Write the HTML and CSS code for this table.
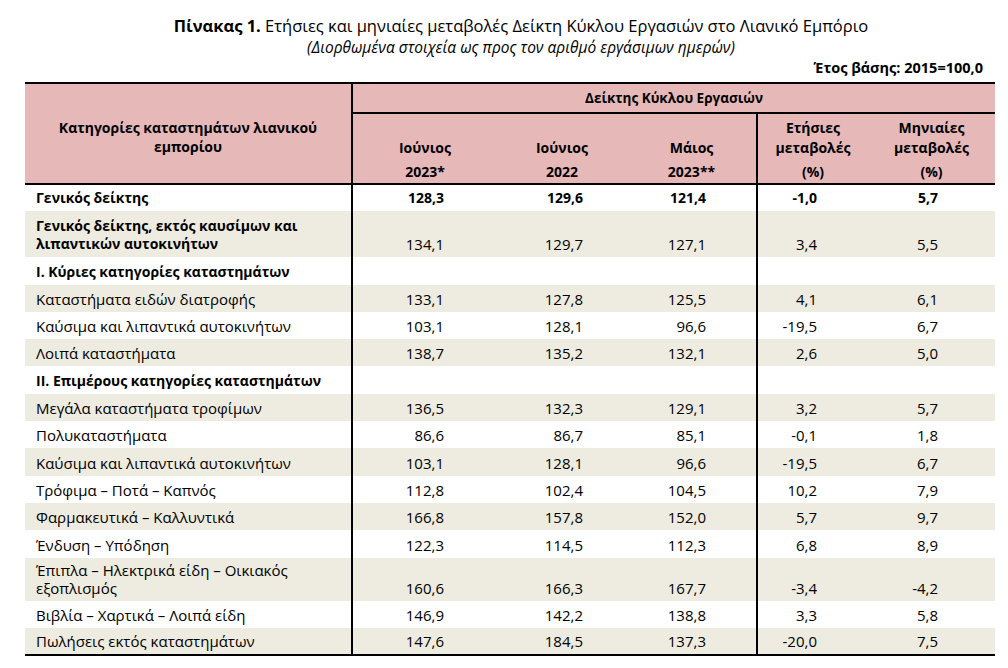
FILE: index.html
```html
<!DOCTYPE html>
<html lang="el">
<head>
<meta charset="utf-8">
<title>Πίνακας 1</title>
<link rel="stylesheet" href="styles.css">
</head>
<body>
<div class="page">
  <div class="title"><b>Πίνακας 1.</b> Ετήσιες και μηνιαίες μεταβολές Δείκτη Κύκλου Εργασιών στο Λιανικό Εμπόριο</div>
  <div class="subtitle">(Διορθωμένα στοιχεία ως προς τον αριθμό εργάσιμων ημερών)</div>
  <div class="base">Έτος βάσης: 2015=100,0</div>
  <table class="data">
    <colgroup>
      <col class="c-label">
      <col class="c-a">
      <col class="c-b">
      <col class="c-c">
      <col class="c-d">
      <col class="c-e">
    </colgroup>
    <thead>
      <tr class="h-top">
        <th rowspan="2" class="h-label sep">Κατηγορίες καταστημάτων λιανικού<br>εμπορίου</th>
        <th colspan="5" class="h-group">Δείκτης Κύκλου Εργασιών</th>
      </tr>
      <tr class="h-sub">
        <th><div class="hl">Ιούνιος</div><div class="hy">2023*</div></th>
        <th><div class="hl">Ιούνιος</div><div class="hy">2022</div></th>
        <th class="sep"><div class="hl">Μάιος</div><div class="hy">2023**</div></th>
        <th><div class="hl">Ετήσιες<br>μεταβολές</div><div class="hy">(%)</div></th>
        <th><div class="hl">Μηνιαίες<br>μεταβολές</div><div class="hy">(%)</div></th>
      </tr>
    </thead>
    <tbody>
      <tr class="bold">
        <td class="lbl sep">Γενικός δείκτης</td>
        <td class="va">128,3</td><td class="vb">129,6</td><td class="vc sep">121,4</td><td class="vd">-1,0</td><td class="ve">5,7</td>
      </tr>
      <tr class="alt dbl">
        <td class="lbl sep b">Γενικός δείκτης, εκτός καυσίμων και<br>λιπαντικών αυτοκινήτων</td>
        <td class="va">134,1</td><td class="vb">129,7</td><td class="vc sep">127,1</td><td class="vd">3,4</td><td class="ve">5,5</td>
      </tr>
      <tr>
        <td class="lbl sep b">Ι. Κύριες κατηγορίες καταστημάτων</td>
        <td class="va"></td><td class="vb"></td><td class="vc sep"></td><td class="vd"></td><td class="ve"></td>
      </tr>
      <tr class="alt">
        <td class="lbl sep">Καταστήματα ειδών διατροφής</td>
        <td class="va">133,1</td><td class="vb">127,8</td><td class="vc sep">125,5</td><td class="vd">4,1</td><td class="ve">6,1</td>
      </tr>
      <tr>
        <td class="lbl sep">Καύσιμα και λιπαντικά αυτοκινήτων</td>
        <td class="va">103,1</td><td class="vb">128,1</td><td class="vc sep">96,6</td><td class="vd">-19,5</td><td class="ve">6,7</td>
      </tr>
      <tr class="alt">
        <td class="lbl sep">Λοιπά καταστήματα</td>
        <td class="va">138,7</td><td class="vb">135,2</td><td class="vc sep">132,1</td><td class="vd">2,6</td><td class="ve">5,0</td>
      </tr>
      <tr>
        <td class="lbl sep b">ΙΙ. Επιμέρους κατηγορίες καταστημάτων</td>
        <td class="va"></td><td class="vb"></td><td class="vc sep"></td><td class="vd"></td><td class="ve"></td>
      </tr>
      <tr class="alt">
        <td class="lbl sep">Μεγάλα καταστήματα τροφίμων</td>
        <td class="va">136,5</td><td class="vb">132,3</td><td class="vc sep">129,1</td><td class="vd">3,2</td><td class="ve">5,7</td>
      </tr>
      <tr>
        <td class="lbl sep">Πολυκαταστήματα</td>
        <td class="va">86,6</td><td class="vb">86,7</td><td class="vc sep">85,1</td><td class="vd">-0,1</td><td class="ve">1,8</td>
      </tr>
      <tr class="alt">
        <td class="lbl sep">Καύσιμα και λιπαντικά αυτοκινήτων</td>
        <td class="va">103,1</td><td class="vb">128,1</td><td class="vc sep">96,6</td><td class="vd">-19,5</td><td class="ve">6,7</td>
      </tr>
      <tr>
        <td class="lbl sep">Τρόφιμα – Ποτά – Καπνός</td>
        <td class="va">112,8</td><td class="vb">102,4</td><td class="vc sep">104,5</td><td class="vd">10,2</td><td class="ve">7,9</td>
      </tr>
      <tr class="alt">
        <td class="lbl sep">Φαρμακευτικά – Καλλυντικά</td>
        <td class="va">166,8</td><td class="vb">157,8</td><td class="vc sep">152,0</td><td class="vd">5,7</td><td class="ve">9,7</td>
      </tr>
      <tr>
        <td class="lbl sep">Ένδυση – Υπόδηση</td>
        <td class="va">122,3</td><td class="vb">114,5</td><td class="vc sep">112,3</td><td class="vd">6,8</td><td class="ve">8,9</td>
      </tr>
      <tr class="alt dbl2">
        <td class="lbl sep">Έπιπλα – Ηλεκτρικά είδη – Οικιακός<br>εξοπλισμός</td>
        <td class="va">160,6</td><td class="vb">166,3</td><td class="vc sep">167,7</td><td class="vd">-3,4</td><td class="ve">-4,2</td>
      </tr>
      <tr>
        <td class="lbl sep">Βιβλία – Χαρτικά – Λοιπά είδη</td>
        <td class="va">146,9</td><td class="vb">142,2</td><td class="vc sep">138,8</td><td class="vd">3,3</td><td class="ve">5,8</td>
      </tr>
      <tr class="alt last">
        <td class="lbl sep">Πωλήσεις εκτός καταστημάτων</td>
        <td class="va">147,6</td><td class="vb">184,5</td><td class="vc sep">137,3</td><td class="vd">-20,0</td><td class="ve">7,5</td>
      </tr>
    </tbody>
  </table>
</div>
</body>
</html>
```

FILE: styles.css
```css
html, body {
  margin: 0;
  padding: 0;
  background: #ffffff;
}

body {
  font-family: "Open Sans", "Noto Sans", "DejaVu Sans", sans-serif;
  color: #000000;
}

.page {
  width: 970px;
  padding: 16px 0 0 25px;
}

.title {
  text-align: center;
  padding-left: 22px;
  font-size: 16.5px;
  line-height: 20px;
  height: 20px;
  white-space: nowrap;
}

.subtitle {
  text-align: center;
  padding-left: 22px;
  font-size: 15.5px;
  font-style: italic;
  line-height: 18px;
  height: 20px;
  margin-top: 2px;
  white-space: nowrap;
}

.base {
  text-align: right;
  padding-right: 12px;
  font-size: 14.5px;
  font-weight: 700;
  line-height: 18px;
  height: 23px;
  margin-top: 1px;
}

.data {
  width: 970px;
  table-layout: fixed;
  border-collapse: collapse;
  font-size: 15px;
}

.c-label { width: 327px; }
.c-a { width: 145px; }
.c-b { width: 130px; }
.c-c { width: 130px; }
.c-d { width: 111px; }
.c-e { width: 127px; }

.data th,
.data td {
  padding: 0;
}

.data thead th {
  background: #e6b9b8;
  font-weight: 700;
  font-size: 14px;
  text-align: center;
}

.h-top th {
  border-top: 2px solid #000;
}

.h-top {
  height: 30px;
}

.data thead th.h-group {
  border-bottom: 2px solid #000;
  vertical-align: middle;
  font-size: 13.5px;
}

.h-label {
  vertical-align: middle;
  line-height: 19px;
  padding-top: 6px !important;
  border-bottom: 2px solid #000;
}

.h-sub {
  height: 71px;
}

.h-sub th {
  vertical-align: bottom;
  border-bottom: 2px solid #000;
}

.hl {
  line-height: 20px;
}

.hy {
  line-height: 20px;
  margin-top: 4px;
  padding-bottom: 1px;
}

.sep {
  border-right: 2px solid #000;
}

.data tbody tr {
  height: 27.3px;
}

.data tbody tr.dbl {
  height: 46px;
}

.data tbody tr.dbl2 {
  height: 43px;
}

.data tbody td {
  vertical-align: bottom;
  line-height: 18px;
  padding-bottom: 4px;
  white-space: nowrap;
}

.data tbody tr.alt td {
  background: #eeece1;
}

.data tbody tr.last td {
  border-bottom: 2px solid #000;
}

.lbl {
  text-align: left;
  padding-left: 11px !important;
}

.b,
.bold td {
  font-weight: 700;
  font-size: 14px;
}

.va { text-align: right; padding-right: 53px !important; }
.vb { text-align: right; padding-right: 44px !important; }
.vc { text-align: right; padding-right: 50px !important; }
.vd { text-align: right; padding-right: 51px !important; }
.ve { text-align: right; padding-right: 57px !important; }
```
